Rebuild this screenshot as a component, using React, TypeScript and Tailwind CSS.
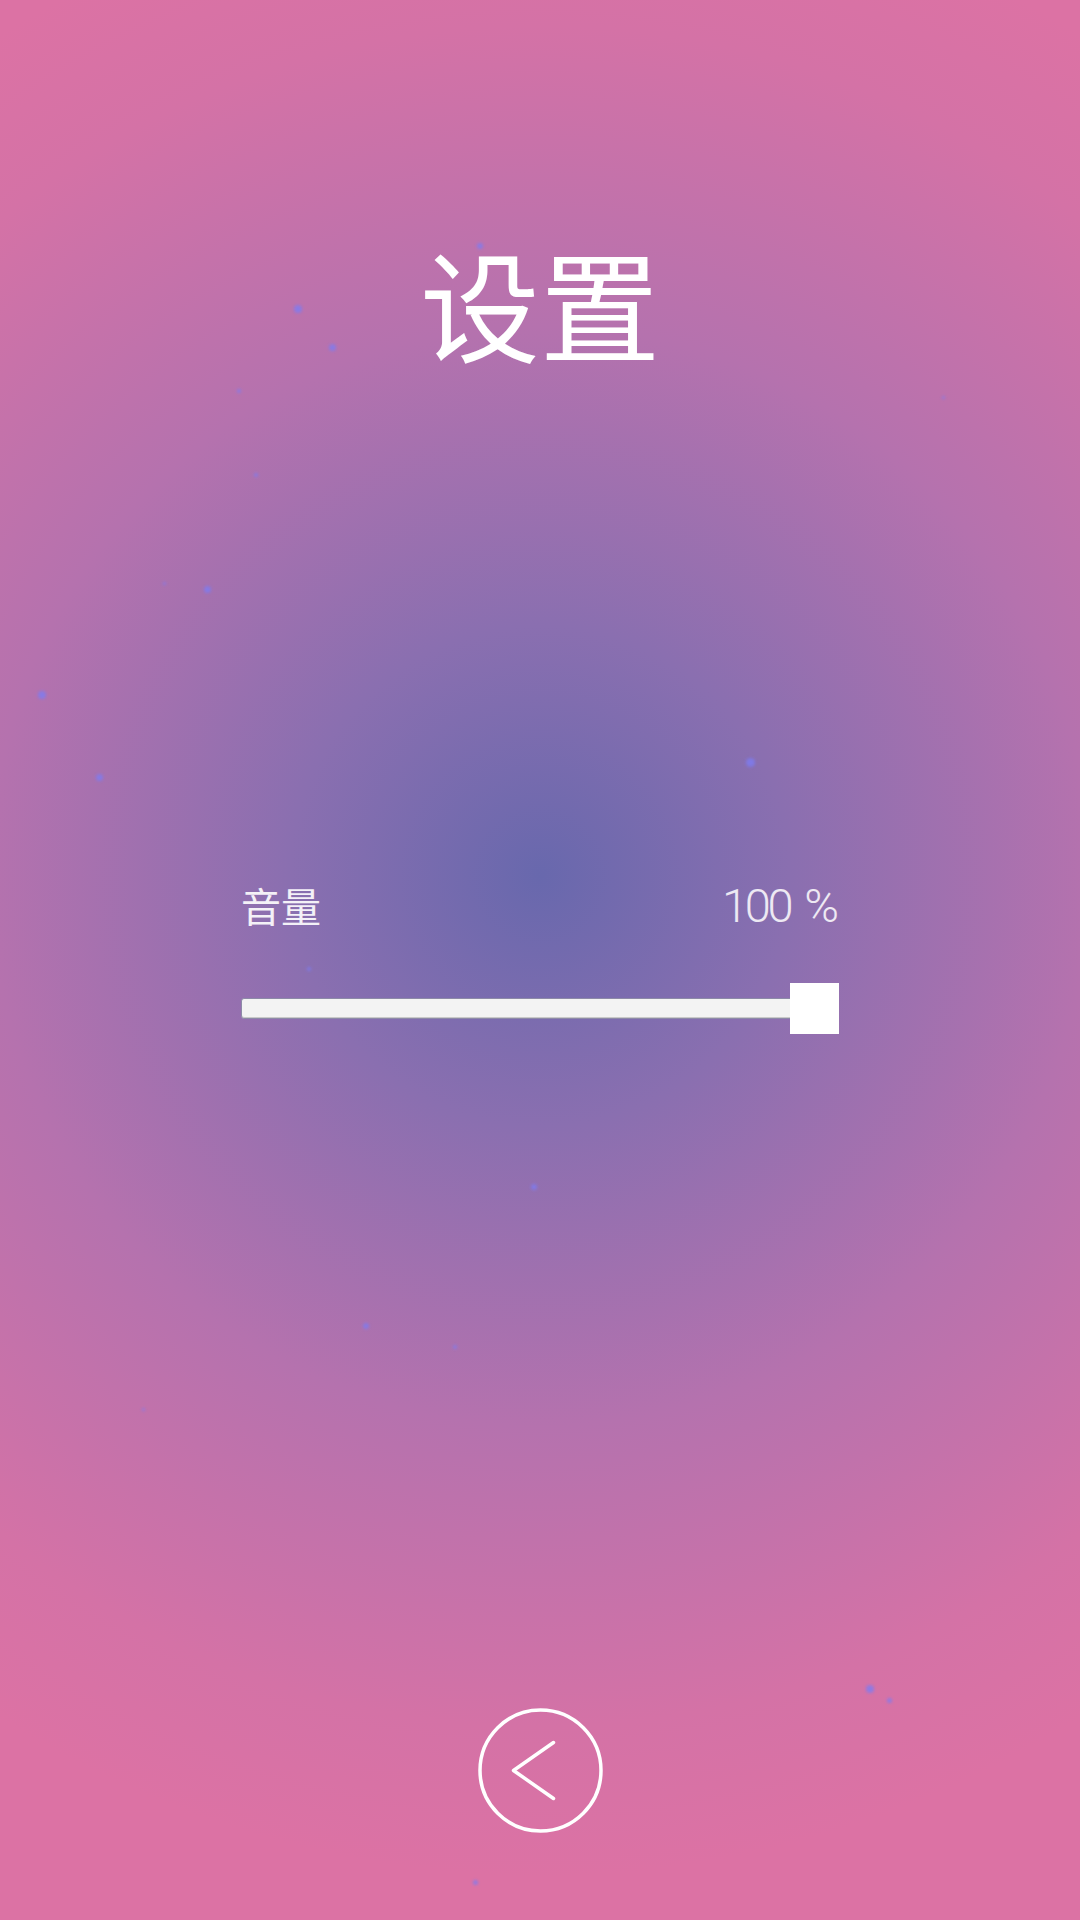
import React from "react";

// floating dust specks over the gradient: [x, y, size]
const specks: [number, number, number][] = [
  [480, 246, 6],
  [298, 309, 8],
  [332, 347, 7],
  [239, 391, 4],
  [256, 475, 4],
  [164, 583, 3],
  [207, 589, 7],
  [42, 695, 8],
  [99, 777, 7],
  [750, 762, 9],
  [943, 397, 3],
  [309, 969, 4],
  [534, 1187, 6],
  [366, 1326, 6],
  [455, 1347, 4],
  [143, 1409, 3],
  [870, 1689, 8],
  [889, 1700, 5],
  [475, 1882, 5],
];

function VolumeSlider({ value }: { value: number }) {
  return (
    <div className="flex w-full flex-col">
      <div className="flex items-baseline justify-between">
        <span className="text-[40px] leading-none text-white/90 [font-family:'Noto_Sans_CJK_SC',sans-serif]">
          音量
        </span>
        <span className="flex items-baseline gap-[14px] text-[47px] font-light leading-none text-white/85 [font-family:Roboto,sans-serif]">
          <span className="tracking-[-0.07em]">{value}</span>
          <span>%</span>
        </span>
      </div>
      <div className="mt-[54px] flex h-[51px] items-center">
        <div className="h-[21px] flex-1 rounded-l-[3px] border border-[#8d8aa8] bg-[#f3f3f3] shadow-[inset_0_-1px_0_#c9c9c9]" />
        <div className="-ml-[5px] h-[51px] w-[49px] bg-white" />
      </div>
    </div>
  );
}

export default function App() {
  return (
    <div className="relative flex h-[1920px] w-full flex-col items-center overflow-hidden bg-[radial-gradient(circle_at_540px_876px,#6868ad_0px,#8a6fb0_250px,#b572ae_550px,#d472a6_850px,#dc72a4_1000px)]">
      {specks.map(([x, y, s], i) => (
        <span
          key={i}
          className="absolute rounded-full bg-[#7d7cf2] opacity-80 blur-[1.5px]"
          style={{ left: x - s / 2, top: y - s / 2, width: s, height: s }}
        />
      ))}

      <h1 className="relative mt-[242px] text-[120px] font-normal leading-none text-white [font-family:'Noto_Sans_CJK_SC',sans-serif]">
        设置
      </h1>

      <div className="relative mt-[520px] w-[598px]">
        <VolumeSlider value={100} />
      </div>

      <button className="relative mt-auto mb-[87px] h-[125px] w-[125px]">
        <svg viewBox="0 0 125 125" className="h-full w-full" fill="none" stroke="white" strokeWidth="3.5" strokeLinecap="round" strokeLinejoin="round">
          <circle cx="62.5" cy="62.5" r="60.5" />
          <polyline points="75.5,34.5 35.5,62.5 75.5,90.5" />
        </svg>
      </button>
    </div>
  );
}
